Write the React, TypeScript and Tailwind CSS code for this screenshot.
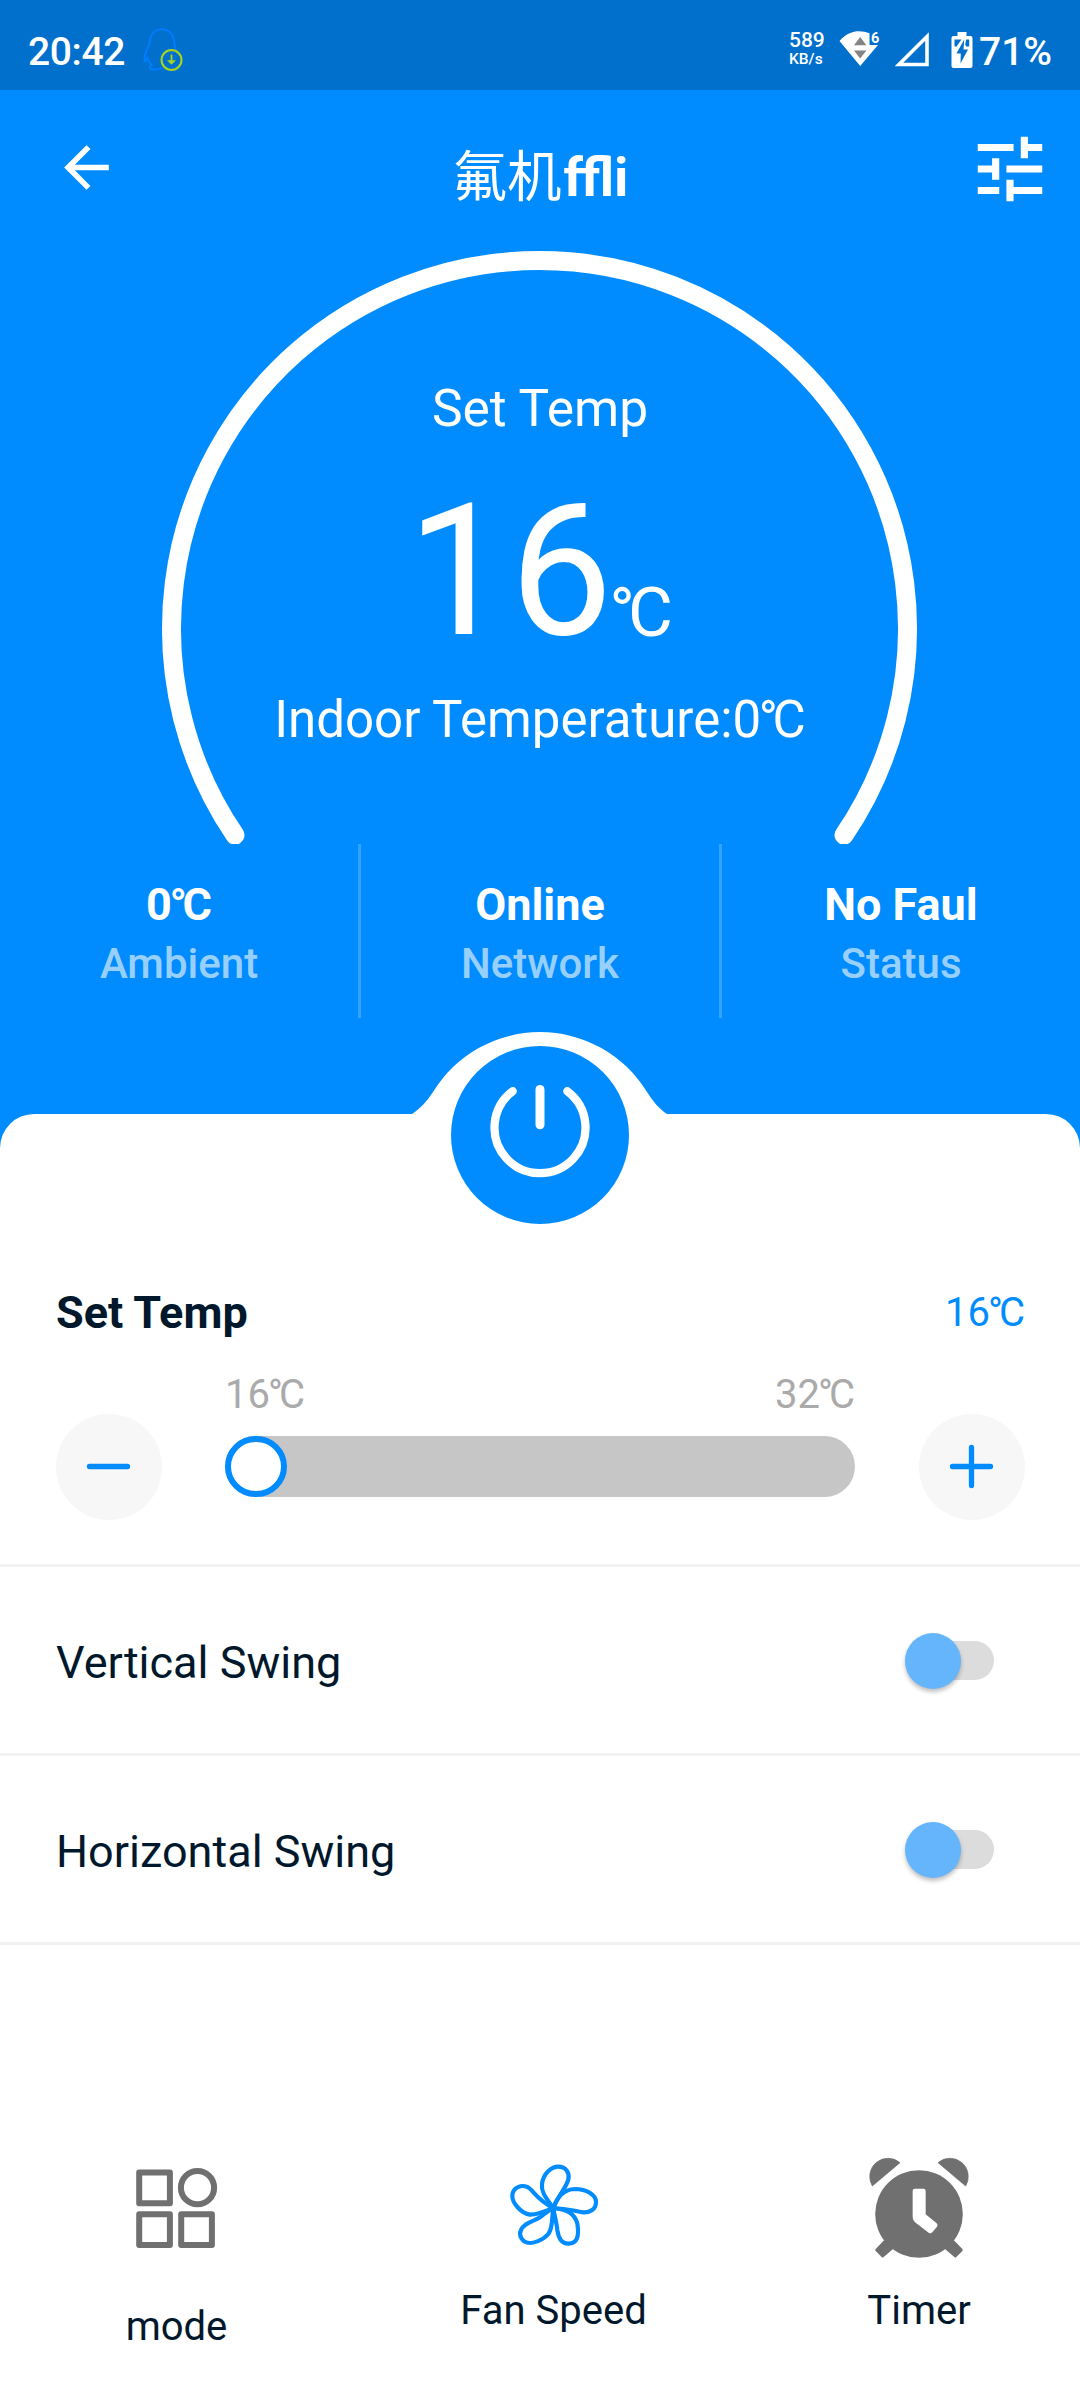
import type { ReactNode } from "react";

function Celsius() {
  return (
    <>
      <span className="ml-[-0.05em] tracking-[-0.1em]">°</span>C
    </>
  );
}

function PenguinIcon() {
  return (
    <svg className="ml-[17px] h-[44px] w-[40px]" viewBox="0 0 40 44" fill="none">
      <path
        d="M33 24 C32 20 31.5 18 31.3 14.500 C30.500 6 25.500 1.200 19 1.200 C12 1.200 7 6 6.700 14.500 C6.500 19 1.500 23 1.500 31 C1.500 34.500 2.500 34 4.500 29.500 C5.500 33 6.500 35.500 9 37 C6 38.500 6 40 8 41 C12 42.300 16 41.500 19 39.500"
        stroke="#007cff"
        strokeWidth="2"
        strokeLinejoin="round"
      />
      <circle cx="28.5" cy="32" r="10" fill="#0070cc" stroke="#a9d51c" strokeWidth="2" />
      <path d="M28.500 26.500v6" stroke="#a9d51c" strokeWidth="1.800" />
      <path d="M24 32.300h9l-4.500 4.500z" fill="#a9d51c" />
    </svg>
  );
}

function WifiIcon() {
  return (
    <svg className="h-[36px] w-[42px]" viewBox="0 0 42 36">
      <path d="M0.500 10 C10-1.500 22-1 30.500 2.300 V14 H39 L21.200 35 Z" fill="#fff" />
      <path d="M15 14.200h12.400L21.200 6zM15 19.500h12.400l-6.200 8z" fill="#848484" />
      <text x="32" y="11.800" fontSize="14.500" fontWeight="700" fill="#fff" fontFamily="Roboto, sans-serif">
        6
      </text>
    </svg>
  );
}

function BatteryIcon() {
  return (
    <svg className="h-[36px] w-[22px]" viewBox="0 0 22 36">
      <path d="M6.500 0h9v4H19.500a2 2 0 0 1 2 2V34a2 2 0 0 1-2 2H2.500a2 2 0 0 1-2-2V6a2 2 0 0 1 2-2h4z" fill="#fff" />
      <path d="M3.500 7.500h7L5.500 14.500h-2zM15.200 7.500h3v7h-3l-1-2z" fill="#0070cc" />
      <path d="M13.200 7.500 5.500 21.500h4.300L9.500 31.500 17 17.500h-4.500z" fill="#0070cc" />
    </svg>
  );
}

function StatusBar() {
  return (
    <div className="flex h-[90px] items-center bg-[#0070cc] pt-[10px] pl-[28px] text-white">
      <span className="w-[98px] pt-[3px] text-[39px] leading-[40px] font-medium tracking-[-0.4px]">20:42</span>
      <PenguinIcon />
      <div className="ml-[606px] flex w-[37px] flex-col font-medium">
        <span className="text-[21px] leading-[19px]">589</span>
        <span className="text-[15.500px] leading-[19px]">KB/s</span>
      </div>
      <div className="mb-[2px] ml-[13px]">
        <WifiIcon />
      </div>
      <svg className="ml-[13px] h-[36px] w-[36px]" viewBox="0 0 36 36" fill="none">
        <path d="M33 4.500v28H5z" stroke="#fff" strokeWidth="3.600" />
      </svg>
      <div className="ml-[21px]">
        <BatteryIcon />
      </div>
      <span className="ml-[6px] pt-[3px] text-[39px] leading-[40px] font-medium">71%</span>
    </div>
  );
}

function Header() {
  return (
    <header className="flex h-[160px] items-start pr-[27px] pl-[53px]">
      <svg className="mt-[44px] h-[67px] w-[67px]" viewBox="0 0 24 24" fill="#fff">
        <path d="M20 11H7.830l5.590-5.590L12 4l-8 8 8 8 1.410-1.410L7.830 13H20v-2z" />
      </svg>
      <h1 className="mt-[52px] flex-1 pr-[6px] text-center text-[54.500px] leading-[70px] font-normal text-white">
        氟机<span className="ml-[2px] font-bold">ffli</span>
      </h1>
      <svg className="mt-[36px] h-[86px] w-[86px]" viewBox="0 0 24 24" fill="#fff">
        <path d="M3 17v2h6v-2H3zM3 5v2h10V5H3zm10 16v-2h8v-2h-8v-2h-2v6h2zM7 9v2H3v2h4v2h2V9H7zm14 4v-2H11v2h10zm-6-4h2V7h4V5h-4V3h-2v6z" />
      </svg>
    </header>
  );
}

function Gauge() {
  return (
    <section className="relative flex h-[594px] flex-col items-center text-white">
      <svg className="absolute top-0 left-[150px] h-[594px] w-[780px]" viewBox="150 250 780 594" fill="none">
        <path d="M235 835.200 A368 368 0 1 1 844 835.200" stroke="#fff" strokeWidth="19" strokeLinecap="round" />
      </svg>
      <span className="mt-[129px] text-[51.500px] leading-[60px]">Set Temp</span>
      <div className="mt-[33px] flex h-[200px] items-baseline">
        <span className="text-[183px] leading-[200px]">16</span>
        <span className="translate-y-[2px] text-[69px] leading-[80px]">
          <Celsius />
        </span>
      </div>
      <span className="mt-[18px] text-[51px] leading-[60px]">
        Indoor Temperature:0
        <Celsius />
      </span>
    </section>
  );
}

function Stat({ value, label }: { value: ReactNode; label: string }) {
  return (
    <div className="flex flex-1 flex-col items-center pt-[34px]">
      <span className="text-[45px] leading-[54px] font-bold text-white">{value}</span>
      <span className="mt-[5px] text-[42px] leading-[54px] font-medium text-white/60">{label}</span>
    </div>
  );
}

function PowerButton() {
  return (
    <div className="absolute top-[-82px] left-[412px] h-[192px] w-[256px]">
      <svg className="absolute inset-0 h-[192px] w-[256px]" viewBox="412 1032 256 192" fill="none">
        <path d="M412 1115 V1114 C421 1108 427 1101 433 1092 A125.500 125.500 0 0 1 647 1092 C653 1101 658 1108 667 1114 V1115 Z" fill="#fff" />
        <circle cx="540" cy="1135" r="89" fill="#008cff" />
        <path d="M512.700 1091.200 A45.500 45.500 0 1 0 567.300 1091.200" stroke="#fff" strokeWidth="8.300" strokeLinecap="round" />
        <path d="M540 1089.500V1124.800" stroke="#fff" strokeWidth="9" strokeLinecap="round" />
      </svg>
    </div>
  );
}

function RoundButton({ children }: { children: ReactNode }) {
  return (
    <button className="flex h-[106px] w-[106px] items-center justify-center rounded-full bg-[#f7f7f7]">
      <svg className="h-[46px] w-[46px]" viewBox="0 0 46 46" stroke="#008cff" strokeWidth="5.300" strokeLinecap="round">
        {children}
      </svg>
    </button>
  );
}

function TemperatureControl() {
  return (
    <section className="h-[453px] border-b-[3px] border-[#f2f2f2] pt-[171px] pr-[55px] pl-[56px]">
      <div className="flex h-[56px] items-center justify-between">
        <h2 className="text-[45px] leading-[56px] font-bold text-[#00182c]">Set Temp</h2>
        <span className="text-[40px] leading-[56px] text-[#008cff]">
          16
          <Celsius />
        </span>
      </div>
      <div className="mt-[29px] flex h-[50px] justify-between pr-[170px] pl-[169px] text-[40px] leading-[50px] text-[#aaaaaa]">
        <span>
          16
          <Celsius />
        </span>
        <span>
          32
          <Celsius />
        </span>
      </div>
      <div className="-mt-[6px] flex items-center justify-between">
        <RoundButton>
          <path d="M3.500 22.500h38" />
        </RoundButton>
        <div className="mr-[1px] mb-[1px] h-[61px] w-[630px] rounded-full bg-[#c6c6c6]">
          <div className="h-[61px] w-[62px] rounded-full border-[6px] border-[#008cff] bg-white" />
        </div>
        <RoundButton>
          <path d="M3.500 22.500h38M22.500 3.500v38" />
        </RoundButton>
      </div>
    </section>
  );
}

function SwingRow({ label }: { label: string }) {
  return (
    <div className="flex h-[189px] items-center justify-between border-b-[3px] border-[#f2f2f2] pr-[86px] pl-[56px]">
      <span className="pt-[6px] text-[45px] leading-[56px] text-[#00182c]">{label}</span>
      <div className="mt-[1px] flex h-[39px] w-[80px] items-center rounded-full bg-[#dcdcdc]">
        <div className="-ml-[9px] h-[56px] w-[56px] shrink-0 rounded-full bg-[#64b5fb] shadow-[0_3px_4px_rgba(0,0,0,0.25)]" />
      </div>
    </div>
  );
}

function ModeIcon() {
  return (
    <svg className="h-[82px] w-[82px]" viewBox="136 2167 82 82" fill="none" stroke="#707070" strokeWidth="6" strokeLinejoin="round">
      <path d="M139.200 2172.500h30.700v30.700h-30.700zM139.200 2214.300h30.700v30.700h-30.700zM181.200 2214.300h30.700v30.700h-30.700z" />
      <circle cx="197.500" cy="2187.700" r="16.600" />
    </svg>
  );
}

function FanIcon() {
  return (
    <svg className="h-[84px] w-[90px]" viewBox="207 99 270 252" fill="none" stroke="#008cff" strokeWidth="12.500" strokeLinejoin="round">
      <path d="M340 234C315 200 303 185 306 162C310 130 335 110 355 110C378 110 390 130 385 148C378 175 358 190 340 234" />
      <path d="M340 234C350 205 368 178 405 177C440 177 467 195 468 215C468 238 450 248 430 247C405 244 385 236 340 234" />
      <path d="M340 234C385 240 403 250 412 280C418 320 412 340 385 341C362 341 355 322 352 300C350 280 345 265 340 234" />
      <path d="M340 234C334 270 340 290 325 312C305 335 275 339 270 339C245 338 235 315 243 300C252 278 280 275 300 262C310 255 320 245 340 234" />
      <path d="M340 234C300 250 290 254 270 254C245 250 215 220 217 195C220 170 245 165 260 170C280 178 285 205 340 234" />
    </svg>
  );
}

function ClockIcon() {
  return (
    <svg className="h-[102px] w-[102px]" viewBox="84 83 306 306" fill="#707070">
      <circle cx="237" cy="254" r="131.500" />
      <path d="M97 170A55 55 0 0 1 180 100ZM377 170A55 55 0 0 0 294 100Z" strokeWidth="2" stroke="#707070" strokeLinejoin="round" />
      <path d="M133 332L107 359Q104 362 107 365L125 383Q128 386 131 383L160 358ZM341 332L367 359Q370 362 367 365L349 383Q346 386 343 383L314 358Z" />
      <path d="M218 185Q218 178 225 178H250Q257 178 257 185V255L290 282Q295 287 291 292L277 309Q271 314 266 310L228 281Q218 273 218 262Z" fill="#fff" />
    </svg>
  );
}

function Tab({ icon, label }: { icon: ReactNode; label: string }) {
  return (
    <div className="flex flex-col items-center">
      {icon}
      <span className="pt-[1px] text-[40px] leading-[48px] whitespace-nowrap text-[#00182c]">{label}</span>
    </div>
  );
}

export default function App() {
  return (
    <main className="flex h-[2400px] w-[1080px] flex-col overflow-hidden bg-[#008cff] font-[Roboto,'Noto_Sans_CJK_SC',sans-serif]">
      <StatusBar />
      <Header />
      <Gauge />
      <section className="mb-[96px] flex h-[174px]">
        <Stat value={<>0<Celsius /></>} label="Ambient" />
        <div className="w-[3px] bg-white/20" />
        <Stat value="Online" label="Network" />
        <div className="w-[3px] bg-white/20" />
        <Stat value="No Faul" label="Status" />
      </section>
      <div className="relative flex-1 rounded-t-[34px] bg-white">
        <PowerButton />
        <TemperatureControl />
        <SwingRow label="Vertical Swing" />
        <SwingRow label="Horizontal Swing" />
        <nav className="grid grid-cols-[353px_401px_326px] items-start">
          <div className="pt-[222px]">
            <Tab icon={<div className="mb-[53px] ml-[1px]"><ModeIcon /></div>} label="mode" />
          </div>
          <div className="pt-[218px]">
            <Tab icon={<div className="mb-[39px]"><FanIcon /></div>} label="Fan Speed" />
          </div>
          <div className="pt-[212px] pl-[4px]">
            <Tab icon={<div className="mb-[27px]"><ClockIcon /></div>} label="Timer" />
          </div>
        </nav>
      </div>
    </main>
  );
}
